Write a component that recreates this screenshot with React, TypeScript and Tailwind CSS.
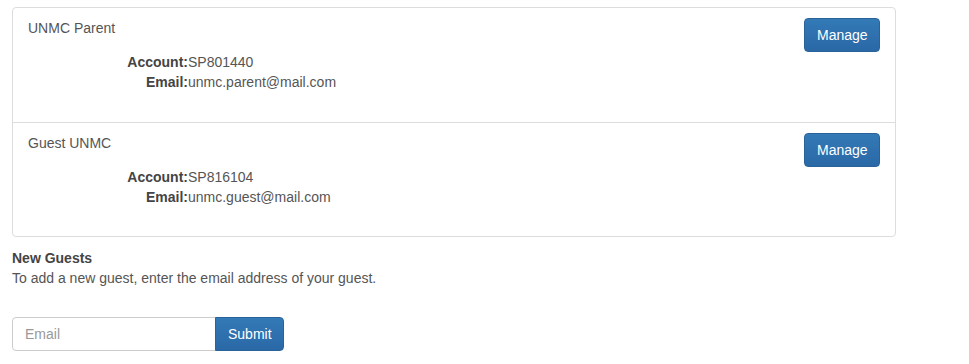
const guests = [
  { name: "UNMC Parent", account: "SP801440", email: "unmc.parent@mail.com" },
  { name: "Guest UNMC", account: "SP816104", email: "unmc.guest@mail.com" },
];

const btnPrimary =
  "h-[34px] px-3 text-[14px] leading-5 text-white border border-[#2a629a] bg-gradient-to-b from-[#337ab7] to-[#2a68a6]";

const App = () => {
  return (
    <div className="w-[969px] h-[364px] bg-white pl-3 pt-[7px] font-['Liberation_Sans',Arial,sans-serif] text-[14px] leading-5 text-[#555]">
      <div className="w-[884px] border border-[#ddd] rounded bg-white">
        {guests.map((g, i) => (
          <div
            key={g.account}
            className={
              "flex justify-between px-[15px] pt-[10px] " +
              (i > 0 ? "border-t border-[#ddd] pb-[9px]" : "pb-[10px]")
            }
          >
            <div className="flex flex-col">
              <div>{g.name}</div>
              <div className="mt-[14px] mb-5">
                <div className="flex">
                  <span className="w-[160px] text-right font-bold text-[#444]">Account:</span>
                  <span>{g.account}</span>
                </div>
                <div className="flex">
                  <span className="w-[160px] text-right font-bold text-[#444]">Email:</span>
                  <span>{g.email}</span>
                </div>
              </div>
            </div>
            <button className={btnPrimary + " rounded w-[76px] self-start"}>Manage</button>
          </div>
        ))}
      </div>

      <div className="mt-[11px] font-bold text-[#444]">New Guests</div>
      <div>To add a new guest, enter the email address of your guest.</div>

      <div className="flex mt-[29px]">
        <input
          placeholder="Email"
          className="w-[204px] h-[34px] px-3 border border-[#ccc] rounded-l outline-none text-[14px] text-[#555] placeholder:text-[#999]"
        />
        <button className={btnPrimary + " rounded-r w-[69px] -ml-px"}>Submit</button>
      </div>
    </div>
  );
};

export default App;
